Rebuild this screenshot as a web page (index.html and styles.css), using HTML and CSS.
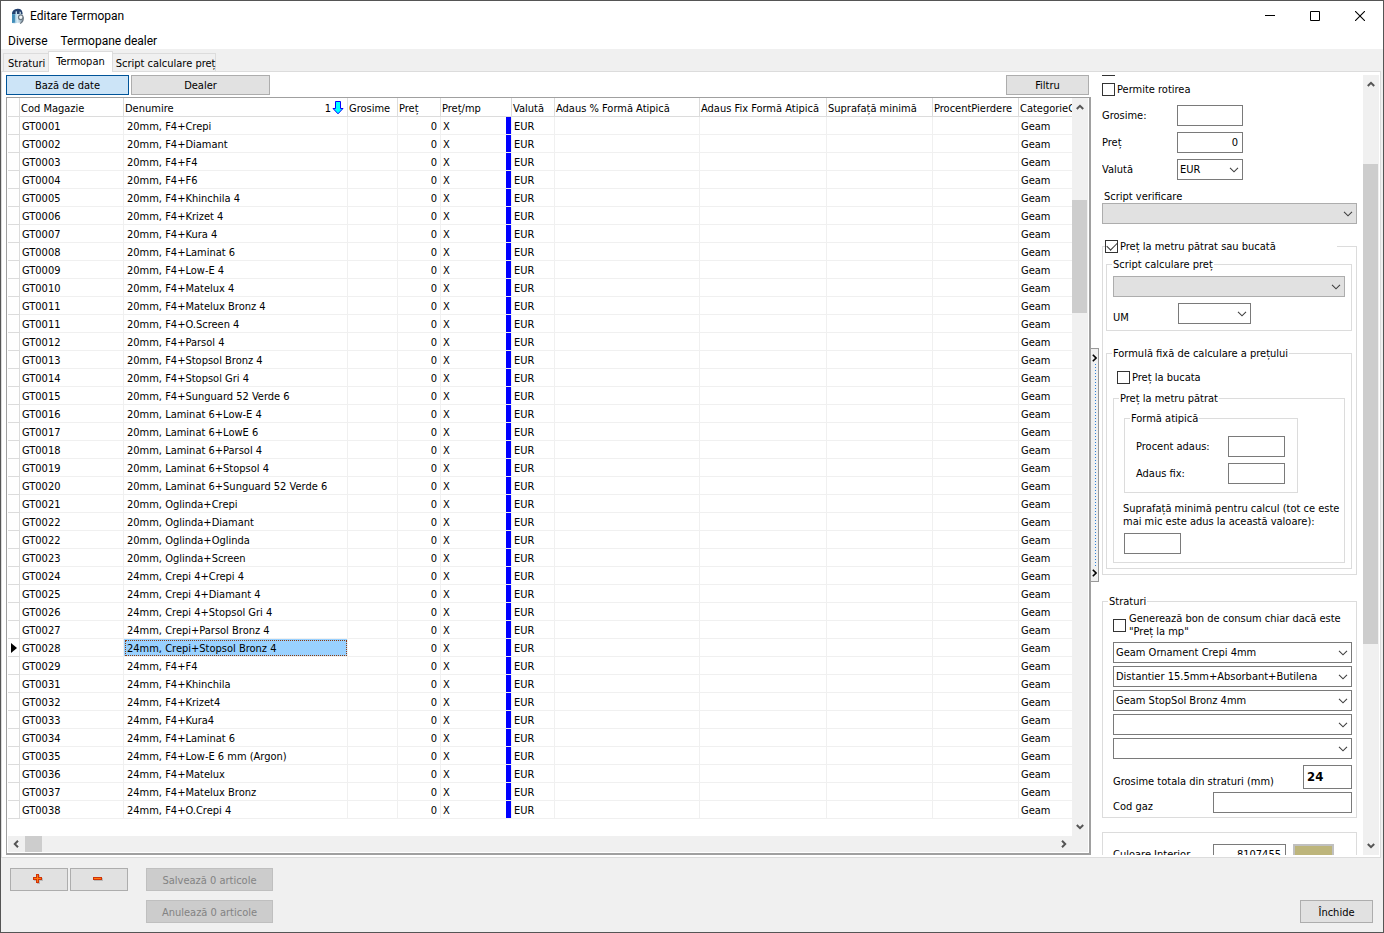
FILE: index.html
```html
<!DOCTYPE html>
<html lang="ro">
<head>
<meta charset="utf-8">
<title>Editare Termopan</title>
<link rel="stylesheet" href="styles.css">
</head>
<body>
<svg class="defs" aria-hidden="true">
  <symbol id="chevron" viewBox="0 0 10 6"><path d="M1 .8 5 4.8 9 .8" fill="none" stroke="#404040" stroke-width="1.1"/></symbol>
  <symbol id="arrow" viewBox="0 0 8 6"><path d="M.8 5 4 1.8 7.2 5" fill="none" stroke="#555" stroke-width="2"/></symbol>
  <symbol id="grip" viewBox="0 0 5 8"><path d="M.8.8 4 4 .8 7.2" fill="none" stroke="#000" stroke-width="1.6"/></symbol>
</svg>
<div class="window">
  <header class="titlebar">
    <svg class="app-icon" viewBox="0 0 14 17" aria-hidden="true">
      <defs><linearGradient id="glass"><stop offset="0" stop-color="#3f8fbd"/><stop offset=".5" stop-color="#d8ecf6"/><stop offset="1" stop-color="#8fa5b5"/></linearGradient></defs>
      <path d="M1 5Q2 1 6.500 1T11.500 5V14Q7 15.500 1 15Z" fill="url(#glass)"/>
      <path d="M1 6Q1.500 1 6.500 .8T11.500 6L10 6V4L8.500 3.500V6H7L6 6V3.200L4.500 3.500V6Z" fill="#24406e"/>
      <path d="M1.500 6.500H4V14.500H1.500Z" fill="#2f7fae" opacity=".7"/>
      <circle cx="9.800" cy="9.300" r="2.300" fill="#f2f5f7" stroke="#6b7883" stroke-width="1.200"/>
      <path d="M12.200 9.300Q12.500 14 9 15.500" fill="none" stroke="#6b7883" stroke-width="1.300"/>
    </svg>
    <h1>Editare Termopan</h1>
    <div class="win-buttons">
      <button aria-label="Minimizare"><svg viewBox="0 0 10 10"><path d="M0 4.500H10" stroke="#000"/></svg></button>
      <button aria-label="Maximizare"><svg viewBox="0 0 10 10"><path d="M.5.5H9.500V9.500H.5Z" fill="none" stroke="#000"/></svg></button>
      <button aria-label="Închidere fereastră"><svg viewBox="0 0 10 10"><path d="M0 0 10 10M10 0 0 10" stroke="#000" stroke-width="1.100"/></svg></button>
    </div>
  </header>
  <nav class="menubar"><button>Diverse</button><button>Termopane dealer</button></nav>
  <div class="tabs" role="tablist">
    <button role="tab" class="tab">Straturi</button>
    <button role="tab" class="tab active" aria-selected="true">Termopan</button>
    <button role="tab" class="tab">Script calculare preț</button>
  </div>

  <main class="page">
    <section class="list-pane">
      <div class="toolbar">
        <button class="btn base pressed">Bază de date</button>
        <button class="btn dealer">Dealer</button>
        <button class="btn filter">Filtru</button>
      </div>
      <div class="grid-box">
        <div class="grid-view">
          <table class="grid">
            <colgroup><col class="c-mark"><col class="c-code"><col class="c-name"><col class="c-thick"><col class="c-price"><col class="c-mp"><col class="c-cur"><col class="c-adp"><col class="c-adf"><col class="c-area"><col class="c-loss"><col class="c-cat"></colgroup>
            <thead><tr>
              <th></th><th>Cod Magazie</th>
              <th><span class="sorted">Denumire<span class="order">1</span><svg class="sort" viewBox="0 0 12 14" aria-hidden="true"><path d="M3.500.5H8.500V7.500H11L6 12.800 1 7.500H3.500Z" fill="#0ff" stroke="#00f"/></svg></span></th>
              <th>Grosime</th><th>Preț</th><th>Preț/mp</th><th>Valută</th><th>Adaus % Formă Atipică</th><th>Adaus Fix Formă Atipică</th><th>Suprafață minimă</th><th>ProcentPierdere</th><th>CategorieGeam</th>
            </tr></thead>
            <tbody id="rows"></tbody>
          </table>
        </div>
        <div class="vscroll" aria-hidden="true"><svg><use href="#arrow"/></svg><div class="track grid-track"><div class="thumb"></div></div><svg class="down"><use href="#arrow"/></svg></div>
        <div class="hscroll" aria-hidden="true"><svg class="left"><use href="#arrow"/></svg><div class="hthumb"></div><svg class="right"><use href="#arrow"/></svg></div>
      </div>
    </section>

    <div class="splitter" aria-hidden="true"><svg><use href="#grip"/></svg><div class="dots"></div><svg><use href="#grip"/></svg></div>

    <section class="editor">
      <form class="form">
        <input type="checkbox" class="clipped" aria-label="Opțiune">
        <label class="check rotate"><input type="checkbox">Permite rotirea</label>
        <div class="fields">
          <label for="gros">Grosime:</label><input id="gros" type="text">
          <label for="pret">Preț</label><input id="pret" type="text" class="num" value="0">
          <label for="val">Valută</label><span class="combo"><select id="val"><option>EUR</option></select><svg><use href="#chevron"/></svg></span>
        </div>
        <label class="verify-label" for="verif">Script verificare</label>
        <span class="combo off"><select id="verif"><option></option></select><svg><use href="#chevron"/></svg></span>

        <fieldset class="price">
          <legend class="wide"><label class="check"><input type="checkbox" checked>Preț la metru pătrat sau bucată</label></legend>
          <fieldset class="script">
            <legend>Script calculare preț</legend>
            <span class="combo off"><select aria-label="Script calculare preț"><option></option></select><svg><use href="#chevron"/></svg></span>
            <div class="unit"><label for="um">UM</label><span class="combo"><select id="um"><option></option></select><svg><use href="#chevron"/></svg></span></div>
          </fieldset>
          <fieldset class="formula">
            <legend>Formulă fixă de calculare a prețului</legend>
            <label class="check piece"><input type="checkbox">Preț la bucata</label>
            <fieldset class="square">
              <legend>Preț la metru pătrat</legend>
              <fieldset class="shape">
                <legend>Formă atipică</legend>
                <label for="proc">Procent adaus:</label><input id="proc" type="text">
                <label for="fix">Adaus fix:</label><input id="fix" type="text">
              </fieldset>
              <label class="area-label" for="arie">Suprafață minimă pentru calcul (tot ce este mai mic este adus la această valoare):</label>
              <input id="arie" class="area" type="text">
            </fieldset>
          </fieldset>
        </fieldset>

        <fieldset class="layers">
          <legend>Straturi</legend>
          <label class="check slip"><input type="checkbox"><span>Generează bon de consum chiar dacă este "Preț la mp"</span></label>
          <div class="stack">
            <span class="combo"><select aria-label="Strat 1"><option>Geam Ornament Crepi 4mm</option></select><svg><use href="#chevron"/></svg></span>
            <span class="combo"><select aria-label="Strat 2"><option>Distantier 15.5mm+Absorbant+Butilena</option></select><svg><use href="#chevron"/></svg></span>
            <span class="combo"><select aria-label="Strat 3"><option>Geam StopSol Bronz 4mm</option></select><svg><use href="#chevron"/></svg></span>
            <span class="combo"><select aria-label="Strat 4"><option></option></select><svg><use href="#chevron"/></svg></span>
            <span class="combo"><select aria-label="Strat 5"><option></option></select><svg><use href="#chevron"/></svg></span>
          </div>
          <div class="line total"><label for="tot">Grosime totala din straturi (mm)</label><input id="tot" type="text" value="24"></div>
          <div class="line gas"><label for="gaz">Cod gaz</label><input id="gaz" type="text"></div>
        </fieldset>

        <div class="colors"><label for="cul">Culoare Interior</label><input id="cul" class="num" type="text" value="8107455"><button type="button" class="swatch" aria-label="Alege culoarea"></button></div>
      </form>
      <div class="vscroll" aria-hidden="true"><svg><use href="#arrow"/></svg><div class="track form-track"><div class="thumb"></div></div><svg class="down"><use href="#arrow"/></svg></div>
    </section>
  </main>

  <footer class="footer">
    <div class="actions">
      <button class="btn" aria-label="Adaugă"><svg class="sign" viewBox="0 0 10 10"><path d="M3 0H6V3H9V6H6V9H3V6H0V3H3Z" fill="#d03208"/><path d="M4 1H5V4H8V5H5V8H4V5H1V4H4Z" fill="#ff7a10"/></svg></button>
      <button class="btn" aria-label="Șterge"><svg class="sign" viewBox="0 0 10 10"><path d="M0 3H9V6H0Z" fill="#d03208"/><path d="M1 4H8V5H1Z" fill="#ff7a10"/></svg></button>
      <button class="btn save" disabled>Salvează 0 articole</button>
      <button class="btn undo" disabled>Anulează 0 articole</button>
    </div>
    <button class="btn close">Închide</button>
  </footer>
</div>
<script src="app.js"></script>
</body>
</html>
```
FILE: styles.css
```css
* { box-sizing: border-box; }
body { margin: 0; }
.defs { display: none; }
.window, button, input, select {
  font-family: "DejaVu Sans Condensed", "DejaVu Sans", sans-serif;
  font-size: 11px;
  line-height: 13px;
  color: #000;
}
button { margin: 0; padding: 0; border: 0; background: none; }
svg { display: block; }

.window {
  height: 100vh;
  display: flex;
  flex-direction: column;
  border: 1px solid #555;
  background: #f0f0f0;
  overflow: hidden;
}

.titlebar { display: flex; align-items: center; height: 30px; padding: 0 1px 0 10px; background: #fff; flex: none; }
.titlebar h1 { margin: 0 0 0 5px; font: 12px/16px Roboto, "Noto Sans", sans-serif; }
.app-icon { width: 14px; height: 17px; }
.win-buttons { display: flex; margin-left: auto; }
.win-buttons button { width: 45px; height: 28px; display: grid; place-items: center; }
.win-buttons svg { width: 10px; height: 10px; }
.menubar { display: flex; gap: 13px; height: 18px; padding-left: 7px; background: #fff; flex: none; }
.menubar button { font: 12px/16px Roboto, "Noto Sans", sans-serif; padding-top: 2px; }

.tabs { display: flex; align-items: flex-end; height: 22px; padding-left: 2px; flex: none; }
.tab { height: 18px; padding: 1px 3px 0 4px; border: 1px solid #dcdcdc; border-bottom: 0; white-space: nowrap; }
.tab + .tab { padding: 1px 0 0 3px; border-left: 0; }
.tabs .tab.active { height: 21px; padding: 0 7px 2px; border-left: 1px solid #dcdcdc; margin-left: -1px; margin-bottom: -1px; background: #fff; position: relative; }

.page {
  flex: 1;
  min-height: 0;
  display: flex;
  margin-right: 2px;
  padding: 3px 1px 2px 4px;
  border: 1px solid #dcdcdc;
  background: #fff;
}
.list-pane { flex: 1; min-width: 0; display: flex; flex-direction: column; }
.toolbar { display: flex; gap: 2px; height: 20px; padding-right: 2px; flex: none; }
.btn { padding-top: 1px; border: 1px solid #adadad; background: #e1e1e1; }
.btn.pressed { border-color: #005499; background: #cce4f7; }
.base { width: 123px; }
.dealer { width: 139px; }
.filter { width: 83px; margin-left: auto; }

.grid-box {
  flex: 1;
  min-height: 0;
  margin-top: 2px;
  padding: 0 1px 1px;
  display: grid;
  grid-template: minmax(0, 1fr) 16px / minmax(0, 1fr) 16px;
  border: 1px solid #a0a0a0;
  border-right-width: 2px;
  border-bottom-width: 2px;
}
.grid-view { overflow: hidden; }
.grid { width: 100%; table-layout: fixed; border-spacing: 0; }
.c-mark { width: 12px; } .c-code { width: 104px; } .c-name { width: 224px; } .c-thick { width: 50px; }
.c-price { width: 43px; } .c-mp { width: 71px; } .c-cur { width: 43px; } .c-adp { width: 145px; }
.c-adf { width: 127px; } .c-area { width: 106px; } .c-loss { width: 86px; }
.grid th, .grid td { overflow: hidden; white-space: nowrap; text-align: left; font-weight: 400; border-right: 1px solid #f0f0f0; border-bottom: 1px solid #f0f0f0; }
.grid th { height: 19px; padding: 2px 0 0 1px; border-color: #dcdcdc; }
.grid td { height: 18px; padding: 2px 0 0 2px; }
.grid td:first-child { padding: 0 0 0 3px; border-color: #dcdcdc; }
.grid td:nth-child(3) { padding-left: 3px; }
.grid th:last-child, .grid td:last-child { border-right: 0; }
.grid td.num { text-align: right; padding-right: 3px; }
.grid td.bar { box-shadow: inset -5px 0 0 #00f; }
.grid td.selected { background: #99d1ff; outline: 1px dotted #8a3c10; outline-offset: -2px; }
.sorted { display: flex; align-items: center; }
.order { margin-left: auto; }
.sort { width: 12px; height: 14px; margin: 0 3px 0 1px; }
.marker { width: 6px; height: 10px; }

.vscroll { width: 16px; display: flex; flex-direction: column; align-items: center; padding: 6px 0; background: #f0f0f0; }
.vscroll svg, .hscroll svg { width: 8px; height: 6px; flex: none; }
.down { transform: rotate(180deg); }
.left { transform: rotate(-90deg); }
.right { transform: rotate(90deg); margin-left: auto; }
.track { flex: 1; align-self: stretch; display: grid; margin: 5px 1px 5px 0; }
.thumb { grid-row: 2; background: #cdcdcd; }
.grid-track { grid-template-rows: 87fr 115fr 515fr; }
.form-track { grid-template-rows: 72fr 480fr 194fr; }
.hscroll { grid-column: 1 / 3; display: flex; align-items: center; padding: 0 20px 0 4px; background: #f0f0f0; }
.hthumb { width: 17px; align-self: stretch; margin-left: 5px; background: #cdcdcd; }

.splitter { width: 8px; height: 30%; align-self: center; display: flex; flex-direction: column; justify-content: space-between; padding: 5px 0 4px 1px; border: 1px solid #999; border-left: 0; background: #f0f0f0; }
.splitter svg { width: 5px; height: 8px; }
.dots { flex: 1; width: 1px; margin: 2px 0 2px 3px; background: repeating-linear-gradient(#2a7fd8 0 1px, transparent 1px 3px); }

.editor { display: flex; gap: 6px; width: 280px; padding-left: 3px; flex: none; }
.form { flex: 1; min-width: 0; overflow: hidden; display: flex; flex-direction: column; }
.form > * { flex: none; }
input[type="text"], select { width: 100%; height: 21px; margin: 0; padding: 0 4px; border: 1px solid #7a7a7a; border-radius: 0; background: #fff; }
input.num { text-align: right; }
input[type="checkbox"] { appearance: none; flex: none; width: 13px; height: 13px; margin: 0; border: 1px solid #333; background: #fff; display: grid; place-items: center; }
input[type="checkbox"]:checked::after { content: ""; width: 9px; height: 5px; margin-bottom: 3px; border: solid #333; border-width: 0 0 1px 1px; transform: rotate(-45deg); }
.check { display: flex; align-items: center; gap: 2px; }
.form > input.clipped { margin-top: -12px; }
.rotate { margin-top: 7px; }
.combo { display: grid; grid-template-columns: minmax(0, 1fr) 17px; align-items: center; }
.combo select { appearance: none; grid-area: 1 / 1 / 2 / 3; padding: 0 16px 0 2px; }
.combo svg { grid-area: 1 / 2; width: 10px; height: 6px; margin-left: 3px; pointer-events: none; position: relative; }
.off select { border-color: #adadad; background: #e1e1e1; }

.fields { display: grid; grid-template-columns: 75px 66px; gap: 6px 0; align-items: center; margin-top: 9px; }
.fields label { padding-bottom: 1px; }
.verify-label { margin: 10px 0 0 2px; }

fieldset { min-width: 0; margin: 0; padding: 0; border: 1px solid #dcdcdc; }
legend { margin-left: -1px; padding: 0 1px; }
legend.wide { width: 232px; padding: 0; }
.square > legend, .layers > legend { margin-left: -5px; }
.shape > legend { margin-left: -6px; }
.price { margin-top: 16px; padding: 5px 4px 5px 3px; }
.script { padding: 5px 6px 6px; }
.unit { display: grid; grid-template-columns: 65px 73px; align-items: end; margin-top: 6px; }
.formula { margin-top: 16px; padding: 11px 6px 5px; }
.piece { margin-left: 4px; }
.square { margin-top: 8px; padding: 7px 0 8px 10px; }
.shape { display: grid; grid-template-columns: 92px 57px; gap: 6px 0; align-items: center; width: 174px; padding: 11px 12px 8px 11px; }
.area-label { display: block; margin: 9px 0 5px -1px; }
.square .area { display: block; width: 57px; }
.layers { margin-top: 20px; padding: 4px 4px 4px 10px; }
.slip { gap: 3px; }
.stack { display: grid; gap: 3px; margin: 4px 0 6px; }
.line { display: flex; justify-content: space-between; align-items: flex-end; }
.total label { padding-bottom: 1px; }
.total input[type="text"] { width: 49px; height: 24px; padding: 0 3px 2px; font-size: 13px; font-weight: 700; }
.gas { margin-top: 3px; }
.gas input[type="text"] { width: 139px; }
.colors { display: grid; grid-template-columns: 100px 73px 48px; align-items: center; margin-top: 14px; padding: 11px 10px; border: 1px solid #dcdcdc; }
.colors label { padding-bottom: 1px; }
.swatch { height: 21px; width: 41px; margin-left: 7px; border: 2px solid #c0c0c0; background: #bdb57b; }

.footer { display: flex; justify-content: space-between; align-items: flex-end; height: 74px; padding: 10px 10px 9px 9px; flex: none; }
.footer .btn { height: 23px; }
.actions { display: grid; grid-template-columns: 58px 58px 143px; gap: 9px 2px; }
.actions .btn { display: grid; place-items: center; }
.actions .save, .actions .undo { margin-left: 16px; border-color: #bfbfbf; background: #ccc; color: #838383; }
.undo { grid-column: 3; }
.sign { width: 10px; height: 10px; margin: 0 2px 2px 0; filter: drop-shadow(1px 1px 0 #bbb); }
.close { width: 73px; }
```
FILE: app.js
```js
const items = [
  ["0001", "20mm, F4+Crepi"], ["0002", "20mm, F4+Diamant"], ["0003", "20mm, F4+F4"],
  ["0004", "20mm, F4+F6"], ["0005", "20mm, F4+Khinchila 4"], ["0006", "20mm, F4+Krizet 4"],
  ["0007", "20mm, F4+Kura 4"], ["0008", "20mm, F4+Laminat 6"], ["0009", "20mm, F4+Low-E 4"],
  ["0010", "20mm, F4+Matelux 4"], ["0011", "20mm, F4+Matelux Bronz 4"], ["0011", "20mm, F4+O.Screen 4"],
  ["0012", "20mm, F4+Parsol 4"], ["0013", "20mm, F4+Stopsol Bronz 4"], ["0014", "20mm, F4+Stopsol Gri 4"],
  ["0015", "20mm, F4+Sunguard 52 Verde 6"], ["0016", "20mm, Laminat 6+Low-E 4"], ["0017", "20mm, Laminat 6+LowE 6"],
  ["0018", "20mm, Laminat 6+Parsol 4"], ["0019", "20mm, Laminat 6+Stopsol 4"], ["0020", "20mm, Laminat 6+Sunguard 52 Verde 6"],
  ["0021", "20mm, Oglinda+Crepi"], ["0022", "20mm, Oglinda+Diamant"], ["0022", "20mm, Oglinda+Oglinda"],
  ["0023", "20mm, Oglinda+Screen"], ["0024", "24mm, Crepi 4+Crepi 4"], ["0025", "24mm, Crepi 4+Diamant 4"],
  ["0026", "24mm, Crepi 4+Stopsol Gri 4"], ["0027", "24mm, Crepi+Parsol Bronz 4"], ["0028", "24mm, Crepi+Stopsol Bronz 4"],
  ["0029", "24mm, F4+F4"], ["0031", "24mm, F4+Khinchila"], ["0032", "24mm, F4+Krizet4"],
  ["0033", "24mm, F4+Kura4"], ["0034", "24mm, F4+Laminat 6"], ["0035", "24mm, F4+Low-E 6 mm (Argon)"],
  ["0036", "24mm, F4+Matelux"], ["0037", "24mm, F4+Matelux Bronz"], ["0038", "24mm, F4+O.Crepi 4"]
];
const current = "0028";
const marker = '<svg class="marker" viewBox="0 0 6 10"><path d="M0 0 6 5 0 10Z"/></svg>';

document.getElementById("rows").innerHTML = items.map(([code, name]) => {
  const on = code === current;
  return `<tr><td>${on ? marker : ""}</td><td>GT${code}</td><td${on ? ' class="selected"' : ""}>${name}</td>` +
    `<td></td><td class="num">0</td><td class="bar">X</td><td>EUR</td>` +
    `<td></td><td></td><td></td><td></td><td>Geam</td></tr>`;
}).join("");
```
